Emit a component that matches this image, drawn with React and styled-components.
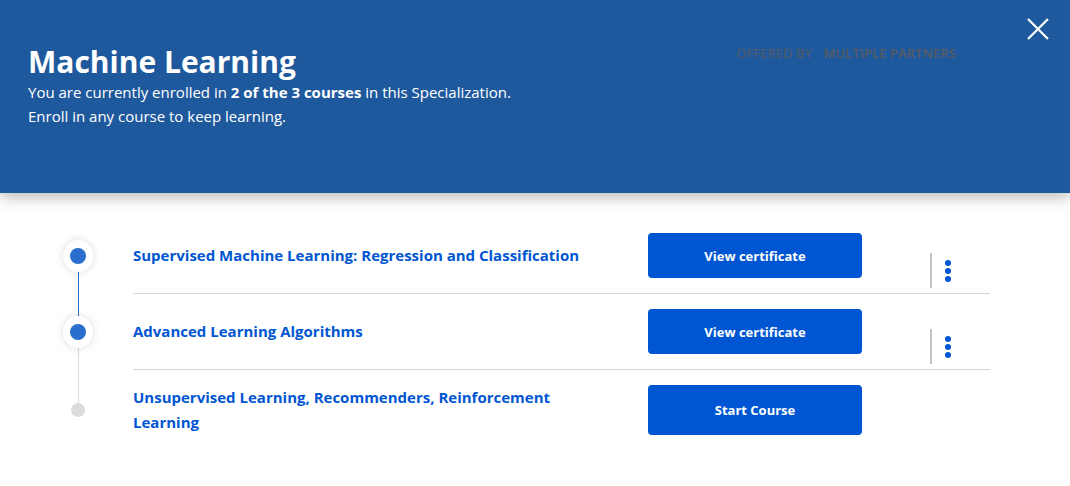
import styled, { createGlobalStyle } from 'styled-components';

const GlobalStyle = createGlobalStyle`
  body {
    margin: 0;
    background: #ffffff;
    font-family: "Open Sans", "Liberation Sans", sans-serif;
  }
`;

const Page = styled.div`
  width: 1070px;
  height: 486px;
  overflow: hidden;
  background: #fff;
`;

const Banner = styled.header`
  position: relative;
  height: 193px;
  box-sizing: border-box;
  padding: 41px 28px 0;
  background-color: #1f599d;
  box-shadow: 0 4px 14px rgba(0, 0, 0, 0.28);
  display: flex;
  justify-content: space-between;
  color: #fff;
`;

const Intro = styled.div`
  display: flex;
  flex-direction: column;
`;

const Heading = styled.h1`
  margin: 0 0 -3px;
  font-size: 30px;
  line-height: 42px;
  font-weight: 700;
`;

const Lead = styled.p`
  margin: 0;
  font-size: 15px;
  line-height: 24px;
  b { font-weight: 700; }
`;

const Offered = styled.div`
  margin: 2px 86px 0 0;
  font-size: 13px;
  line-height: 20px;
  color: #585b63;
  letter-spacing: 0.1px;
  span { margin-left: 8px; font-weight: 600; }
`;

const Close = styled.button`
  position: absolute;
  top: 16px;
  right: 19px;
  width: 26px;
  height: 26px;
  padding: 0;
  border: none;
  background: none;
  cursor: pointer;
`;

const List = styled.div`
  padding: 25px 80px 0 63px;
`;

const Row = styled.div`
  display: flex;
`;

const Rail = styled.div`
  position: relative;
  width: 30px;
  margin-right: 40px;
  display: flex;
  align-items: center;
  justify-content: center;
  &::before, &::after {
    content: '';
    position: absolute;
    left: 15px;
    width: 1px;
  }
  &::before {
    top: 0;
    height: 50%;
    background: ${p => p.$up || 'transparent'};
  }
  &::after {
    top: 50%;
    bottom: 0;
    background: ${p => p.$down || 'transparent'};
  }
`;

const Step = styled.div`
  position: relative;
  z-index: 1;
  display: flex;
  align-items: center;
  justify-content: center;
  width: ${p => (p.$done ? '32px' : '14px')};
  height: ${p => (p.$done ? '32px' : '14px')};
  border-radius: 50%;
  background: ${p => (p.$done ? '#fff' : '#dcdcdc')};
  box-shadow: ${p => (p.$done ? '0 0 8px rgba(0,0,0,0.14)' : 'none')};
  &::after {
    content: '';
    display: ${p => (p.$done ? 'block' : 'none')};
    width: 16px;
    height: 16px;
    border-radius: 50%;
    background: #2b6fcc;
  }
`;

const Body = styled.div`
  flex: 1;
  display: grid;
  grid-template-columns: 1fr 214px 128px;
  align-items: center;
  padding: 15px 0;
  border-bottom: ${p => (p.$last ? 'none' : '1px solid #d6d6d6')};
`;

const Title = styled.a`
  padding-right: 50px;
  font-size: 15px;
  line-height: 25px;
  font-weight: 700;
  color: #0056d2;
  text-decoration: none;
  cursor: pointer;
`;

const Action = styled.button`
  height: ${p => (p.$tall ? '50px' : '45px')};
  border: none;
  border-radius: 4px;
  background: #0056d2;
  color: #fff;
  font-family: inherit;
  font-size: 13px;
  font-weight: 700;
  cursor: pointer;
`;

const More = styled.div`
  align-self: start;
  display: flex;
  align-items: center;
  height: 35px;
  margin: 20px 0 -10px 68px;
  padding-left: 13px;
  border-left: 2px solid #c4c4c4;
`;

const Dots = styled.div`
  display: flex;
  flex-direction: column;
  gap: 2px;
  i {
    width: 6px;
    height: 6px;
    border-radius: 50%;
    background: #0056d2;
  }
`;

const BLUE = '#2b6fcc';
const GRAY = '#dadada';

const courses = [
  { title: 'Supervised Machine Learning: Regression and Classification', done: true, action: 'View certificate', up: null, down: BLUE },
  { title: 'Advanced Learning Algorithms', done: true, action: 'View certificate', up: BLUE, down: GRAY },
  { title: 'Unsupervised Learning, Recommenders, Reinforcement Learning', done: false, action: 'Start Course', up: GRAY, down: null },
];

const App = () => {
  return (
    <>
      <GlobalStyle />
      <Page>
        <Banner>
          <Intro>
            <Heading>Machine Learning</Heading>
            <Lead>You are currently enrolled in <b>2 of the 3 courses</b> in this Specialization.</Lead>
            <Lead>Enroll in any course to keep learning.</Lead>
          </Intro>
          <Offered>OFFERED BY <span>MULTIPLE PARTNERS</span></Offered>
          <Close aria-label="Close">
            <svg width="26" height="26" viewBox="0 0 26 26">
              <path d="M3 3 L23 23 M23 3 L3 23" stroke="#fff" strokeWidth="2.2" fill="none" />
            </svg>
          </Close>
        </Banner>

        <List>
          {courses.map((c, i) => (
            <Row key={c.title}>
              <Rail $up={c.up} $down={c.down}>
                <Step $done={c.done} />
              </Rail>
              <Body $last={i === courses.length - 1}>
                <Title>{c.title}</Title>
                <Action $tall={!c.done}>{c.action}</Action>
                {c.done ? (
                  <More>
                    <Dots><i /><i /><i /></Dots>
                  </More>
                ) : <div />}
              </Body>
            </Row>
          ))}
        </List>
      </Page>
    </>
  );
};

export default App;
